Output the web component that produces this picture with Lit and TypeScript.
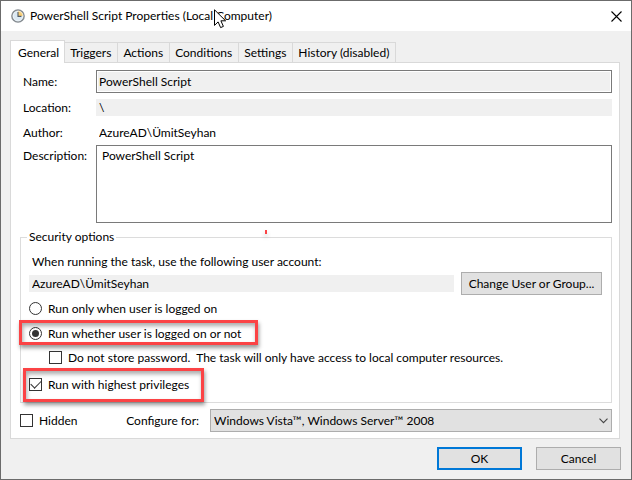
import { LitElement, html, css, svg } from "lit";
import { customElement, state } from "lit/decorators.js";

const TABS = ["General", "Triggers", "Actions", "Conditions", "Settings", "History (disabled)"];

const clockIcon = svg`
  <svg class="clock" viewBox="0 0 14 14" width="14" height="14" aria-hidden="true">
    <circle cx="7" cy="7" r="6.1" fill="#dbe8f2" stroke="#858b90" stroke-width="1.5" />
    <path d="M7 7V1.8A5.2 5.2 0 0 1 12.2 7Z" fill="#f8cd74" />
    <circle cx="7" cy="7" r="4.9" fill="none" stroke="#f7fafc" stroke-width=".6" />
    <path d="M7 3V7.4H10.4" fill="none" stroke="#4f5b68" stroke-width="1.1" />
  </svg>`;

const closeIcon = svg`
  <svg viewBox="0 0 11 11" width="11" height="11" aria-hidden="true">
    <path d="M.5 .5 10.5 10.5M10.5 .5 .5 10.5" fill="none" stroke="#000" stroke-width="1.1" />
  </svg>`;

const pointerIcon = svg`
  <svg class="pointer" viewBox="0 0 13 20" width="13" height="20" aria-hidden="true">
    <path d="M.5 .8V16.4L4.1 12.9 6.6 18.6 9.4 17.4 6.9 11.8H11.6Z" fill="#fff" stroke="#000" stroke-width="1" />
  </svg>`;

@customElement("app-root")
export class AppRoot extends LitElement {
  @state() private tab = 0;

  static styles = css`
    :host {
      display: block;
      font: 12px/16px Lato, "Open Sans", sans-serif;
      color: #000;
    }
    * { box-sizing: border-box; }
    button, input, textarea, select { font: inherit; color: inherit; margin: 0; border-radius: 0; }
    .window {
      display: flex;
      flex-direction: column;
      min-height: 100vh;
      background: #f0f0f0;
      border: 1px solid #6b6b6b;
    }
    .titlebar {
      position: relative;
      display: flex;
      align-items: center;
      height: 30px;
      padding: 0 9px 0 10px;
      gap: 5px;
      background: #fff;
    }
    .title { flex: 1; margin: 0; font: inherit; white-space: nowrap; }
    .clock { display: block; }
    .close { display: flex; padding: 0; border: 0; background: none; }
    .pointer { position: absolute; left: 213px; top: 8px; }
    .tabs { display: flex; align-items: flex-end; margin: 9px 9px 0; }
    .tab {
      height: 20px;
      padding: 0 6px 0 5px;
      border: 1px solid #d9d9d9;
      border-width: 1px 1px 0 0;
      background: #f0f0f0;
      white-space: nowrap;
      line-height: 19px;
    }
    .tab.active {
      position: relative;
      height: 23px;
      margin-bottom: -1px;
      padding: 0 5px 0 7px;
      border-left-width: 1px;
      background: #fff;
    }
    .panel {
      display: flex;
      flex-direction: column;
      margin: 0 11px 0 9px;
      padding: 7px 7px 6px 9px;
      border: 1px solid #d9d9d9;
      background: #fff;
    }
    .row { display: grid; grid-template-columns: 73px 1fr; align-items: center; padding-left: 3px; }
    .field { width: 100%; height: 17px; padding: 0 3px; border: 0; background: #f0f0f0; outline: 0; }
    .name { height: 23px; padding: 0 2px; border: 1px solid #7a7a7a; box-shadow: inset 0 0 0 1px #fff; }
    .location { margin-top: 6px; }
    .author { margin-top: 8px; }
    .author .field { background: none; }
    .description { margin-top: 4px; align-items: start; }
    .description label { padding-top: 3px; }
    .description textarea {
      display: block;
      width: 100%;
      height: 78px;
      padding: 2px 5px;
      border: 1px solid #7a7a7a;
      background: #fff;
      resize: none;
      outline: 0;
    }
    .group {
      position: relative;
      min-width: 0;
      margin: 6px 0 0;
      padding: 0 9px 9px 8px;
      border: 1px solid #dcdcdc;
    }
    .group legend { margin-left: -2px; padding: 0 2px; }
    .fleck {
      position: absolute;
      left: 244px;
      top: -15px;
      width: 2px;
      height: 4px;
      background: #fb4345;
      box-shadow: 0 3px 4px #0004;
    }
    .prompt { margin: 9px 0 2px; padding-left: 3px; }
    .account { display: flex; align-items: center; gap: 7px; }
    .push {
      height: 23px;
      padding: 0 6px;
      border: 1px solid #adadad;
      background: #e1e1e1;
      white-space: nowrap;
      line-height: 16px;
    }
    .change { flex: none; width: 141px; }
    .option { position: relative; display: flex; align-items: center; height: 17px; }
    .option label { padding-left: 6px; white-space: pre; }
    .first { margin-top: 5px; }
    .second { margin-top: 8px; }
    .nested { margin: 7px 0 10px 20px; }
    .option input {
      appearance: none;
      flex: none;
      display: grid;
      place-items: center;
      width: 13px;
      height: 13px;
      border: 1px solid #333;
      background: #fff;
    }
    .option input[type="radio"] { border-radius: 50%; }
    .option input[type="radio"]:checked::before {
      content: "";
      width: 7px;
      height: 7px;
      border-radius: 50%;
      background: #333;
    }
    .option input[type="checkbox"]:checked::before {
      content: "";
      width: 9px;
      height: 5px;
      margin-top: -3px;
      border: solid #333;
      border-width: 0 0 1px 1px;
      transform: rotate(-45deg);
    }
    .mark {
      position: absolute;
      pointer-events: none;
      border: 3px solid #fb4345;
      box-shadow: 1px 3px 4px #0006, inset 1px 3px 4px #0005;
    }
    .mark-run { left: -10px; top: -5px; width: 239px; height: 25px; }
    .mark-priv { left: -6px; top: -8px; width: 181px; height: 34px; }
    .compat { display: flex; align-items: center; margin-top: 6px; }
    .compat-label { margin: 0 11px 0 auto; white-space: nowrap; }
    .lead { display: flex; flex: none; align-items: center; width: 190px; }
    .picker { position: relative; flex: 1; display: flex; }
    .picker select {
      appearance: none;
      width: 100%;
      height: 23px;
      padding: 0 22px 0 3px;
      border: 1px solid #adadad;
      background: #e1e1e1;
    }
    .arrow { position: absolute; right: 4px; top: 9px; pointer-events: none; }
    .footer { display: flex; justify-content: flex-end; gap: 14px; padding: 8px 10px 9px; }
    .footer .push { width: 85px; }
    .footer .default { border: 2px solid #0078d7; }
  `;

  render() {
    return html`
      <main class="window">
        <header class="titlebar">
          ${clockIcon}
          <h1 class="title">PowerShell Script Properties (Local Computer)</h1>
          <button class="close" aria-label="Close">${closeIcon}</button>
          ${pointerIcon}
        </header>
        <nav class="tabs" role="tablist">
          ${TABS.map(
            (name, i) => html`<button
              role="tab"
              class="tab ${i === this.tab ? "active" : ""}"
              aria-selected=${i === this.tab ? "true" : "false"}
              @click=${() => (this.tab = i)}
            >${name}</button>`
          )}
        </nav>
        <section class="panel">
          <div class="row">
            <label for="name">Name:</label>
            <input id="name" class="field name" readonly value="PowerShell Script" />
          </div>
          <div class="row location">
            <label for="location">Location:</label>
            <input id="location" class="field" readonly value="\\" />
          </div>
          <div class="row author">
            <label for="author">Author:</label>
            <input id="author" class="field" readonly value="AzureAD\\ÜmitSeyhan" />
          </div>
          <div class="row description">
            <label for="description">Description:</label>
            <textarea id="description" .value=${"PowerShell Script"}></textarea>
          </div>
          <fieldset class="group">
            <legend>Security options</legend>
            <span class="fleck"></span>
            <div class="prompt"><label for="account">When running the task, use the following user account:</label></div>
            <div class="account">
              <input id="account" class="field" readonly value="AzureAD\\ÜmitSeyhan" />
              <button class="push change">Change User or Group...</button>
            </div>
            <div class="option first">
              <input type="radio" name="run" id="run-on" />
              <label for="run-on">Run only when user is logged on</label>
            </div>
            <div class="option second">
              <input type="radio" name="run" id="run-any" checked />
              <label for="run-any">Run whether user is logged on or not</label>
              <span class="mark mark-run"></span>
            </div>
            <div class="option nested">
              <input type="checkbox" id="nopass" />
              <label for="nopass">Do not store password.  The task will only have access to local computer resources.</label>
            </div>
            <div class="option">
              <input type="checkbox" id="highest" checked />
              <label for="highest">Run with highest privileges</label>
              <span class="mark mark-priv"></span>
            </div>
          </fieldset>
          <div class="compat">
            <div class="lead">
              <div class="option">
                <input type="checkbox" id="hidden" />
                <label for="hidden">Hidden</label>
              </div>
              <label class="compat-label" for="configure">Configure for:</label>
            </div>
            <div class="picker">
              <select id="configure">
                <option>Windows Vista™, Windows Server™ 2008</option>
              </select>
              <svg class="arrow" viewBox="0 0 9 6" width="9" height="6" aria-hidden="true">
                <path d="M.5 .7 4.5 4.7 8.5 .7" fill="none" stroke="#444" stroke-width="1.1" />
              </svg>
            </div>
          </div>
        </section>
        <footer class="footer">
          <button class="push default">OK</button>
          <button class="push">Cancel</button>
        </footer>
      </main>
    `;
  }
}
